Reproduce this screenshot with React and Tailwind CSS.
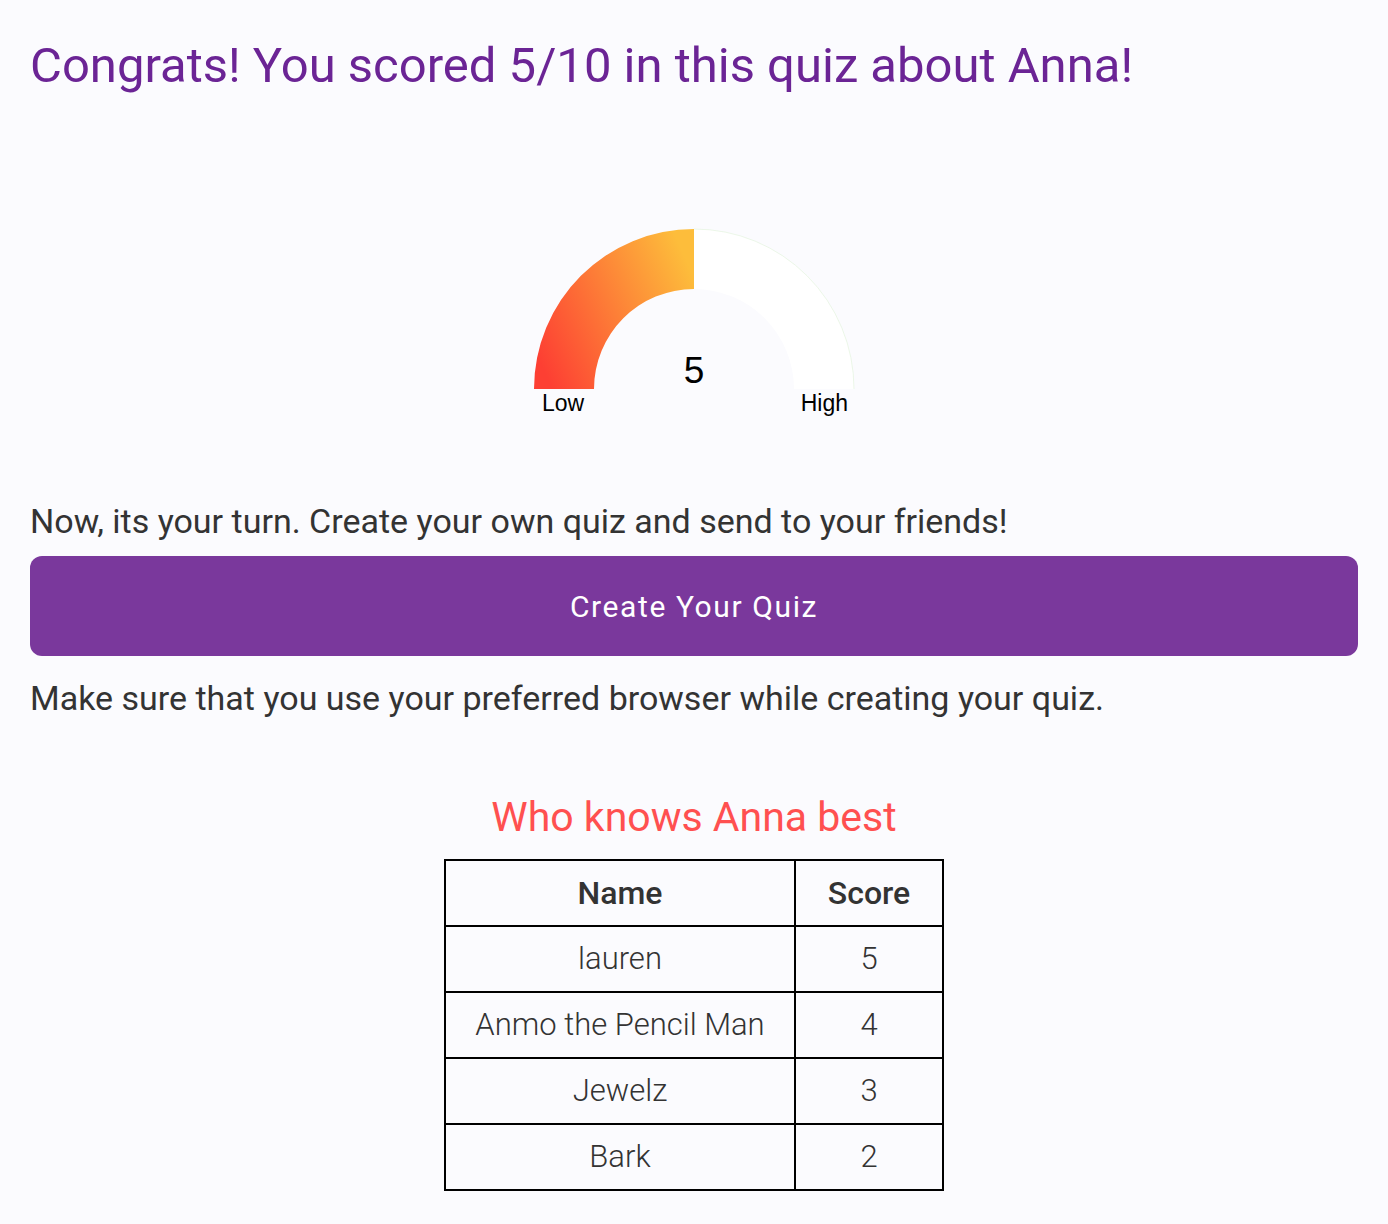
import React from "react";

const scores = [
  { name: "lauren", score: 5 },
  { name: "Anmo the Pencil Man", score: 4 },
  { name: "Jewelz", score: 3 },
  { name: "Bark", score: 2 },
];

// half-donut gauge, value out of 10
const Gauge = ({ value = 5, max = 10 }) => {
  const cx = 170;
  const cy = 170;
  const R = 160;
  const r = 100;
  const angle = Math.PI - (value / max) * Math.PI;
  const ox = cx + R * Math.cos(angle);
  const oy = cy - R * Math.sin(angle);
  const ix = cx + r * Math.cos(angle);
  const iy = cy - r * Math.sin(angle);

  return (
    <svg width="340" height="200" viewBox="0 0 340 200">
      <defs>
        <linearGradient id="gaugeFill" x1="0" y1="0.75" x2="1" y2="0.3">
          <stop offset="0%" stopColor="#fd3f33" />
          <stop offset="100%" stopColor="#fdbd3b" />
        </linearGradient>
      </defs>
      <path
        d={`M ${ox} ${oy} A ${R} ${R} 0 0 1 ${cx + R} ${cy} L ${cx + r} ${cy} A ${r} ${r} 0 0 0 ${ix} ${iy} Z`}
        fill="#ffffff"
      />
      <path
        d={`M ${ox} ${oy} A ${R} ${R} 0 0 1 ${cx + R} ${cy}`}
        fill="none"
        stroke="#dff1d8"
        strokeWidth="0.6"
      />
      <path
        d={`M ${cx - R} ${cy} A ${R} ${R} 0 0 1 ${ox} ${oy} L ${ix} ${iy} A ${r} ${r} 0 0 0 ${cx - r} ${cy} Z`}
        fill="url(#gaugeFill)"
      />
      <text
        x={cx}
        y="164"
        textAnchor="middle"
        fontFamily="'Liberation Sans', Arial, sans-serif"
        fontSize="37"
        fill="#000"
      >
        {value}
      </text>
      <text
        x="18"
        y="192"
        fontFamily="'Liberation Sans', Arial, sans-serif"
        fontSize="23"
        fill="#000"
      >
        Low
      </text>
      <text
        x="324"
        y="192"
        textAnchor="end"
        fontFamily="'Liberation Sans', Arial, sans-serif"
        fontSize="23"
        fill="#000"
      >
        High
      </text>
    </svg>
  );
};

const App = () => {
  return (
    <div className="min-h-screen bg-[#fbfbfe] px-[30px] pt-[38px] pb-10 font-['Roboto',sans-serif] text-[#333]">
      <h1 className="text-[49px] leading-[55px] text-[#6b2495]">
        Congrats! You scored 5/10 in this quiz about Anna!
      </h1>

      <div className="mt-[126px] flex justify-center">
        <Gauge value={5} max={10} />
      </div>

      <p className="mt-[78px] text-[34px] leading-[48px]">
        Now, its your turn. Create your own quiz and send to your friends!
      </p>

      <button className="mt-[11px] h-[100px] w-full rounded-xl bg-[#7a389c] text-[30px] tracking-[1.6px] text-white">
        Create Your Quiz
      </button>

      <p className="mt-[18px] text-[34px] leading-[48px]">
        Make sure that you use your preferred browser while creating your quiz.
      </p>

      <h2 className="mt-[72px] text-center text-[41px] leading-[46px] text-[#ff5050]">
        Who knows Anna best
      </h2>

      <table className="mx-auto mt-[19px] w-[500px] border-collapse text-center">
        <thead>
          <tr className="h-[66px]">
            <th className="w-[350px] border-2 border-black text-[32px] font-medium">
              Name
            </th>
            <th className="border-2 border-black text-[32px] font-medium">
              Score
            </th>
          </tr>
        </thead>
        <tbody>
          {scores.map((row) => (
            <tr key={row.name} className="h-[66px]">
              <td className="border-2 border-black text-[31px] font-light">
                {row.name}
              </td>
              <td className="border-2 border-black text-[31px] font-light">
                {row.score}
              </td>
            </tr>
          ))}
        </tbody>
      </table>
    </div>
  );
};

export default App;
